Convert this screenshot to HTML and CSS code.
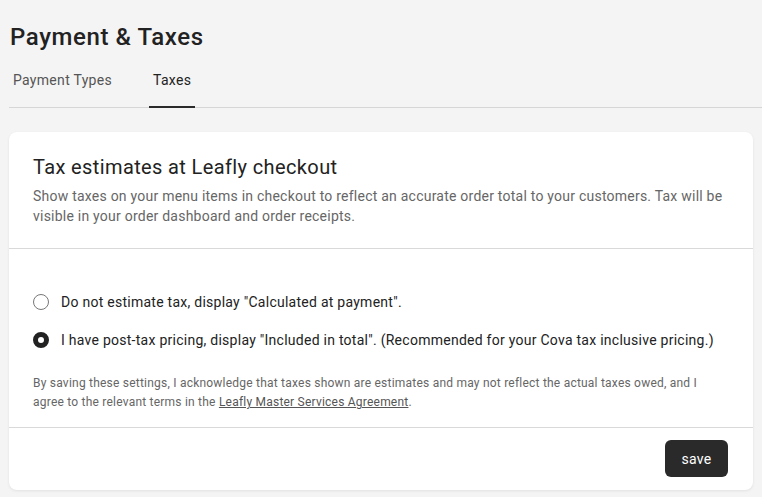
FILE: index.html
```html
<!DOCTYPE html>
<html lang="en">
<head>
<meta charset="utf-8">
<title>Payment &amp; Taxes</title>
<link rel="stylesheet" href="styles.css">
</head>
<body>
<main class="page">
  <h1 class="page-title">Payment &amp; Taxes</h1>
  <nav class="tabs">
    <a class="tab">Payment Types</a>
    <a class="tab tab-active">Taxes</a>
  </nav>
  <section class="card">
    <header class="card-header">
      <h2 class="card-title">Tax estimates at Leafly checkout</h2>
      <p class="card-desc">Show taxes on your menu items in checkout to reflect an accurate order total to your customers. Tax will be visible in your order dashboard and order receipts.</p>
    </header>
    <div class="card-body">
      <label class="radio-row">
        <span class="radio"></span>
        <span class="radio-label">Do not estimate tax, display "Calculated at payment".</span>
      </label>
      <label class="radio-row">
        <span class="radio radio-checked"></span>
        <span class="radio-label">I have post-tax pricing, display "Included in total". (Recommended for your Cova tax inclusive pricing.)</span>
      </label>
      <p class="disclaimer">By saving these settings, I acknowledge that taxes shown are estimates and may not reflect the actual taxes owed, and I agree to the relevant terms in the <a class="link">Leafly Master Services Agreement</a>.</p>
    </div>
    <footer class="card-footer">
      <button class="btn-save">save</button>
    </footer>
  </section>
</main>
</body>
</html>
```
FILE: styles.css
```css
* { box-sizing: border-box; }
html, body { margin: 0; padding: 0; }
body {
  background: #f4f4f4;
  font-family: Roboto, "Liberation Sans", sans-serif;
  color: #222;
  width: 762px;
  height: 497px;
  overflow: hidden;
}
.page {
  padding: 22px 9px 0 9px;
}
.page-title {
  margin: 0 0 0 1px;
  font-size: 24px;
  line-height: 30px;
  font-weight: 500;
  letter-spacing: 0.6px;
  color: #222;
}
.tabs {
  display: flex;
  gap: 32px;
  margin-top: 14px;
  margin-right: -9px;
  border-bottom: 1px solid #d6d6d6;
}
.tab {
  padding: 4px 4px 16px 4px;
  font-size: 14px;
  line-height: 20px;
  letter-spacing: 0.3px;
  color: #555;
  border-bottom: 2px solid transparent;
  margin-bottom: -1px;
}
.tab-active {
  margin-left: 1px;
  color: #222;
  border-bottom-color: #2a2a2a;
}
.card {
  margin-top: 24px;
  width: 744px;
  background: #fff;
  border-radius: 8px;
  box-shadow: 0 1px 3px rgba(0,0,0,0.08);
}
.card-header {
  padding: 23px 18px 22px 24px;
  border-bottom: 1px solid #d9d9d9;
}
.card-title {
  margin: 0;
  font-size: 20px;
  line-height: 24px;
  font-weight: 400;
  letter-spacing: 0.38px;
  color: #222;
}
.card-desc {
  margin: 7px 0 0 0;
  font-size: 14px;
  line-height: 20px;
  letter-spacing: 0.23px;
  color: #666;
}
.card-body {
  padding: 42px 24px 15px 24px;
  border-bottom: 1px solid #d9d9d9;
}
.radio-row {
  display: flex;
  align-items: center;
  gap: 12px;
  height: 22px;
  margin-bottom: 16px;
  font-size: 14px;
  letter-spacing: 0.26px;
  color: #222;
}
.radio {
  width: 16px;
  height: 16px;
  border-radius: 50%;
  border: 1px solid #777;
  flex: none;
}
.radio-checked {
  border: 5px solid #222;
  background: #fff;
}
.disclaimer {
  margin: 23px 0 0 0;
  font-size: 12px;
  line-height: 19px;
  letter-spacing: 0.22px;
  color: #666;
}
.link {
  color: #555;
  text-decoration: underline;
}
.card-footer {
  display: flex;
  justify-content: flex-end;
  padding: 12px 25px 13px 24px;
}
.btn-save {
  font-family: inherit;
  font-size: 14px;
  letter-spacing: 0.3px;
  color: #fff;
  background: #2a2a2a;
  border: 0;
  border-radius: 6px;
  width: 63px;
  height: 37px;
  padding: 0;
}
```
